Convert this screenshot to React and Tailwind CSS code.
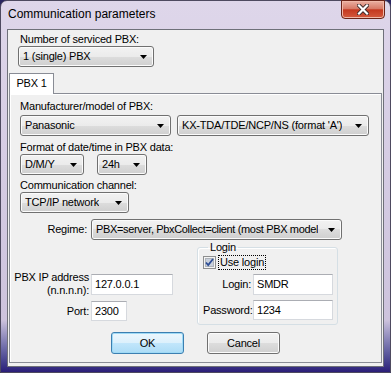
import React from 'react';

const Arrow = () => (
  <svg width="7" height="4" viewBox="0 0 7 4" className="shrink-0">
    <path d="M0 0h7L3.5 4z" fill="#000" />
  </svg>
);

const Combo = ({ w, tight, children }) => (
  <div
    className={`${w} h-[21px] flex items-center justify-between gap-[2px] rounded-[3px] border border-[#707070] bg-[linear-gradient(#f2f2f2,#ebebeb_50%,#dddddd_50%,#cfcfcf)] shadow-[inset_0_0_0_1px_#fbfbfb] pl-[4px] pr-[6px]`}
  >
    <span className={tight ? 'overflow-hidden whitespace-nowrap tracking-[-0.35px]' : 'overflow-hidden whitespace-nowrap'}>{children}</span>
    <Arrow />
  </div>
);

const Field = ({ w, h, children }) => (
  <div className={`${w} ${h} flex items-center border border-[#d6d9de] border-t-[#abadb3] bg-white pl-[3px] whitespace-nowrap`}>
    {children}
  </div>
);

const Button = ({ primary, children }) => (
  <button
    className={
      primary
        ? 'w-[73px] h-[22px] rounded-[3px] border border-[#3c7fb1] bg-[linear-gradient(#ecf7fd,#dcf0fc_50%,#c2e6fb_50%,#acdcf6)] shadow-[inset_0_0_0_1px_#9fdaf6]'
        : 'w-[73px] h-[22px] rounded-[3px] border border-[#707070] bg-[linear-gradient(#f2f2f2,#ebebeb_50%,#dddddd_50%,#cfcfcf)] shadow-[inset_0_0_0_1px_#fbfbfb]'
    }
  >
    {children}
  </button>
);

const CheckBox = () => (
  <svg width="13" height="13" viewBox="0 0 13 13" className="shrink-0">
    <rect x="0.5" y="0.5" width="12" height="12" fill="#f4f4f4" stroke="#8e8f8f" />
    <rect x="2.5" y="2.5" width="8" height="8" fill="#c9d0dc" stroke="#aeb3b9" />
    <path d="M3 6.5l2.2 2.5L10 3" fill="none" stroke="#2d4d95" strokeWidth="1.8" />
  </svg>
);

const App = () => {
  return (
    <div className="w-[391px] h-[373px] overflow-hidden bg-[#2a2560] font-['Liberation_Sans',Arial,sans-serif] text-[11px] leading-[13px] tracking-[-0.2px] text-black">
      <div className="h-full flex flex-col rounded-t-[7px] border border-[#4e4a60] bg-linear-to-b from-[#ded6ea] via-[#cdc3dd] via-[86%] to-[#2b1d78] px-[6px] pb-[5px]">
        {/* title bar */}
        <div className="h-[28px] flex items-start justify-between shrink-0">
          <span className="pt-[6px] pl-[1px] text-[12px] leading-[14px] tracking-normal text-black">Communication parameters</span>
          <div className="w-[44px] h-[19px] -mt-px -mr-px flex items-center justify-center rounded-b-[4px] border border-[#6b2418] bg-[linear-gradient(#eab0a2,#d77a67_45%,#c4381f_52%,#d45a3e)] shadow-[inset_0_0_0_1px_#f0b8a8]">
            <svg width="12" height="11" viewBox="0 0 12 11">
              <path d="M2 1.5l8 8M10 1.5l-8 8" stroke="#3b2a2a" strokeWidth="4" strokeLinecap="square" />
              <path d="M2 1.5l8 8M10 1.5l-8 8" stroke="#fff" strokeWidth="2.2" strokeLinecap="square" />
            </svg>
          </div>
        </div>

        {/* client area */}
        <div className="flex-1 flex flex-col border border-[#6e7079] bg-[#f0f0f0]">
          <div className="pl-[12px] mt-[3px]">Number of serviced PBX:</div>
          <div className="ml-[10px]">
            <Combo w="w-[136px]">1 (single) PBX</Combo>
          </div>

          {/* tab header */}
          <div className="ml-[1px] mt-[6px] w-[45px] h-[21px] -mb-px relative z-10 flex items-center justify-center border border-b-0 border-[#898c95] bg-white pb-[1px]">
            PBX 1
          </div>

          {/* tab panel */}
          <div className="ml-[1px] mr-[1px] mb-[3px] flex-1 flex flex-col border border-[#898c95] bg-[#f0f0f0] shadow-[inset_1px_1px_0_#ffffff] pl-[10px] pt-[6px]">
            <div>Manufacturer/model of PBX:</div>
            <div className="flex gap-[6px] mt-[2px]">
              <Combo w="w-[151px]">Panasonic</Combo>
              <Combo w="w-[192px]">KX-TDA/TDE/NCP/NS (format 'A')</Combo>
            </div>

            <div className="mt-[5px]">Format of date/time in PBX data:</div>
            <div className="flex gap-[13px]">
              <Combo w="w-[64px]">D/M/Y</Combo>
              <Combo w="w-[50px]">24h</Combo>
            </div>

            <div className="mt-[4px]">Communication channel:</div>
            <div>
              <Combo w="w-[109px]">TCP/IP network</Combo>
            </div>

            <div className="flex items-center gap-[4px] mt-[6px]">
              <span className="w-[67px] text-right">Regime:</span>
              <Combo w="w-[251px]" tight>PBX=server, PbxCollect=client (most PBX model</Combo>
            </div>

            {/* IP / Port and Login group */}
            <div className="flex items-start gap-[24px] mt-px -ml-[6px]">
              <div className="flex flex-col gap-[4px] mt-[30px]">
                <div className="flex items-center gap-[2px]">
                  <span className="w-[75px] text-right whitespace-nowrap">
                    PBX IP address
                    <br />
                    (n.n.n.n):
                  </span>
                  <Field w="w-[82px]" h="h-[21px]">127.0.0.1</Field>
                </div>
                <div className="flex items-center gap-[2px]">
                  <span className="w-[75px] text-right">Port:</span>
                  <Field w="w-[36px]" h="h-[20px]">2300</Field>
                </div>
              </div>

              <fieldset className="w-[141px] h-[84px] rounded-[3px] border border-[#d5dfe5] shadow-[inset_1px_1px_0_#ffffff] pl-[5px]">
                <legend className="ml-[5px] px-[2px]">Login</legend>
                <div className="flex items-center gap-[2px] mt-px">
                  <CheckBox />
                  <span className="border border-dotted border-black px-px leading-[13px]">Use login</span>
                </div>
                <div className="flex items-center gap-[2px] mt-[4px]">
                  <span className="w-[48px] text-right">Login:</span>
                  <Field w="w-[80px]" h="h-[21px]">SMDR</Field>
                </div>
                <div className="flex items-center gap-[2px] mt-[5px]">
                  <span className="w-[48px] text-right">Password:</span>
                  <Field w="w-[80px]" h="h-[20px]">1234</Field>
                </div>
              </fieldset>
            </div>

            <div className="flex justify-center gap-[23px] mt-[7px] pr-[10px]">
              <Button primary>OK</Button>
              <Button>Cancel</Button>
            </div>
          </div>
        </div>
      </div>
    </div>
  );
};

export default App;
